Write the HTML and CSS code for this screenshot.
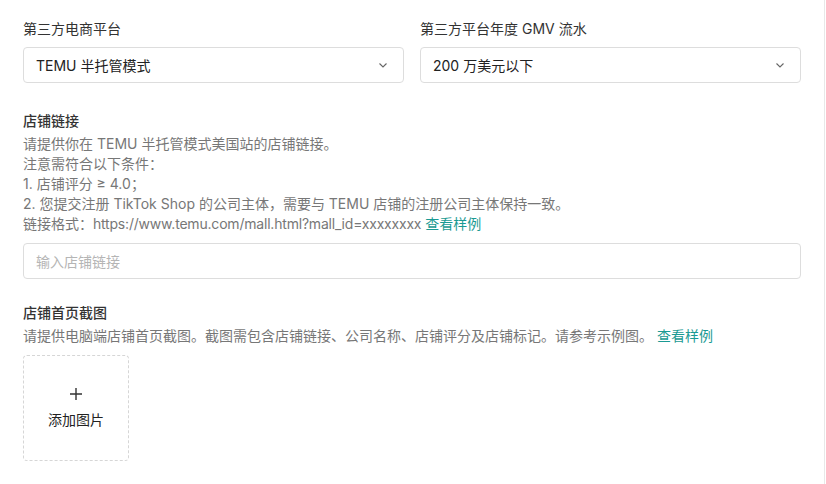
FILE: index.html
```html
<!DOCTYPE html>
<html lang="zh-CN">
<head>
  <meta charset="UTF-8" />
  <meta name="viewport" content="width=device-width, initial-scale=1.0" />
  <title>店铺信息</title>
  <link rel="stylesheet" href="styles.css">
</head>
<body>
  <div class="page">
    <div class="row">
      <div class="field">
        <div class="label">第三方电商平台</div>
        <div class="select">
          <span>TEMU 半托管模式</span>
          <svg class="arrow" width="12" height="12" viewBox="0 0 12 12"><path d="M2.5 4.5 L6 8 L9.5 4.5" fill="none" stroke="#666" stroke-width="1.1"/></svg>
        </div>
      </div>
      <div class="field">
        <div class="label">第三方平台年度 GMV 流水</div>
        <div class="select">
          <span>200 万美元以下</span>
          <svg class="arrow" width="12" height="12" viewBox="0 0 12 12"><path d="M2.5 4.5 L6 8 L9.5 4.5" fill="none" stroke="#666" stroke-width="1.1"/></svg>
        </div>
      </div>
    </div>

    <div class="section">
      <div class="title">店铺链接</div>
      <div class="desc">
        请提供你在 TEMU 半托管模式美国站的店铺链接。<br>
        注意需符合以下条件：<br>
        1. 店铺评分 ≥ 4.0；<br>
        2. 您提交注册 TikTok Shop 的公司主体，需要与 TEMU 店铺的注册公司主体保持一致。<br>
        链接格式：<span class="url">https://www.temu.com/mall.html?mall_id=xxxxxxxx</span> <a href="#">查看样例</a>
      </div>
      <input class="input" type="text" placeholder="输入店铺链接">
    </div>

    <div class="section shot">
      <div class="title">店铺首页截图</div>
      <div class="desc">
        请提供电脑端店铺首页截图。截图需包含店铺链接、公司名称、店铺评分及店铺标记。请参考示例图。 <a href="#">查看样例</a>
      </div>
      <div class="upload">
        <svg width="14" height="14" viewBox="0 0 14 14"><path d="M7 1 V13 M1 7 H13" stroke="#333" stroke-width="1.4"/></svg>
        <div>添加图片</div>
      </div>
    </div>
  </div>
</body>
</html>
```

FILE: styles.css
```css
body {
  margin: 0;
  background: #fff;
  font-family: Inter, "Noto Sans CJK SC", sans-serif;
  font-size: 14px;
  color: #222;
  border-right: 1px solid #e8e8e8;
  width: 825px;
  height: 484px;
  box-sizing: border-box;
  overflow: hidden;
}
.page {
  padding: 18px 23px 0 23px;
}
.row {
  display: flex;
  gap: 16px;
}
.field {
  flex: 1;
}
.label {
  color: #333;
  line-height: 22px;
  margin-bottom: 7px;
}
.select {
  height: 36px;
  border: 1px solid #ddd;
  border-radius: 4px;
  box-sizing: border-box;
  display: flex;
  align-items: center;
  justify-content: space-between;
  padding: 0 12px;
  color: #222;
}
.arrow {
  margin-right: 2px;
}
.section {
  margin-top: 27px;
}
.section.shot {
  margin-top: 23px;
}
.title {
  font-weight: 500;
  color: #333;
  line-height: 22px;
}
.desc {
  color: #777;
  line-height: 20px;
  margin-top: 2px;
}
.url {
  letter-spacing: -0.2px;
}
.desc a {
  color: #1a9a93;
  text-decoration: none;
}
.input {
  display: block;
  width: 100%;
  height: 36px;
  box-sizing: border-box;
  margin-top: 9px;
  border: 1px solid #ddd;
  border-radius: 4px;
  padding: 0 12px;
  font: inherit;
  color: #222;
}
.input::placeholder {
  color: #b5b5b5;
}
.upload {
  width: 106px;
  height: 106px;
  box-sizing: border-box;
  margin-top: 9px;
  border: 1px dashed #d6d6d6;
  border-radius: 4px;
  display: flex;
  flex-direction: column;
  align-items: center;
  justify-content: center;
  gap: 8px;
  color: #222;
}
```
